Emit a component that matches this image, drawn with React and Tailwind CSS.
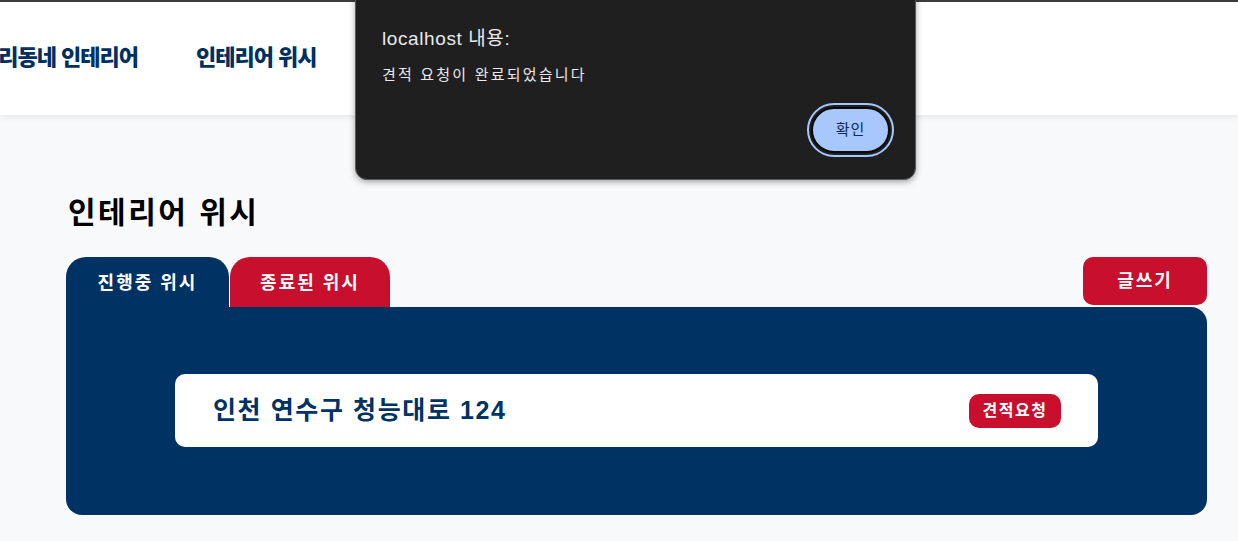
import React from "react";

const KR = { fontFamily: '"Liberation Sans", "Noto Sans CJK KR", "Noto Sans", sans-serif' };

function AlertBox() {
  return (
    <div
      className="absolute left-[355px] top-[-12px] w-[561px] h-[192px] rounded-[12px] bg-[#1f1f1f] border border-[#5a5a5a] shadow-[0_2px_6px_rgba(0,0,0,0.35)]"
      style={KR}
    >
      <div className="pl-[26px] pt-[37px]">
        <p className="text-[19px] leading-[26px] tracking-[0.6px] text-[#e8eaed]">localhost 내용:</p>
        <p className="mt-[13px] text-[15px] leading-[20px] tracking-[2.2px] text-[#e8eaed]">견적 요청이 완료되었습니다</p>
      </div>
      <div className="absolute right-[21px] bottom-[22px] rounded-full border-2 border-[#a8c7fa] p-[2px]">
        <button className="h-[46px] w-[79px] rounded-full bg-[#a8c7fa] border-2 border-[#0b0b0b] text-[15px] tracking-[1px] text-[#0a2a5c]">
          확인
        </button>
      </div>
    </div>
  );
}

export default function App() {
  return (
    <div className="relative min-h-[541px] w-[1238px] overflow-hidden bg-[#f8f9fb]" style={KR}>
      <div className="h-[2px] bg-[#3c3c3c]" />
      <header className="h-[113px] bg-white shadow-[0_2px_6px_rgba(0,0,0,0.08)] flex items-center">
        <nav className="ml-[-21px] flex items-center gap-[58px] pb-[2px] text-[22px] font-black tracking-[-1px] text-[#00305f]">
          <span>우리동네 인테리어</span>
          <span>인테리어 위시</span>
        </nav>
      </header>

      <main className="pl-[66px] pr-[31px] pt-[78px]">
        <h1 className="pl-[2px] text-[30px] leading-[40px] font-bold tracking-[2.5px] text-black">인테리어 위시</h1>

        <div className="mt-[24px] flex items-end justify-between">
          <div className="flex gap-[1px]">
            <button className="h-[50px] w-[163px] rounded-t-[20px] bg-[#003263] pt-[2px] text-[18px] font-bold tracking-[2px] text-white">
              진행중 위시
            </button>
            <button className="h-[50px] w-[160px] rounded-t-[20px] bg-[#c8102e] pt-[2px] text-[18px] font-bold tracking-[2px] text-white">
              종료된 위시
            </button>
          </div>
          <button className="mb-[2px] h-[48px] w-[124px] rounded-[10px] bg-[#c8102e] text-[18px] font-bold tracking-[2px] text-white">
            글쓰기
          </button>
        </div>

        <section className="h-[208px] rounded-b-[16px] rounded-tr-[16px] bg-[#003263] px-[109px] pt-[67px]">
          <div className="flex h-[73px] items-center justify-between rounded-[10px] bg-white pl-[38px] pr-[37px]">
            <span className="text-[25px] font-bold tracking-[1.6px] text-[#003263]">인천 연수구 청능대로 124</span>
            <button className="h-[34px] w-[92px] rounded-[10px] bg-[#c8102e] text-[16px] font-bold tracking-[1.5px] text-white">
              견적요청
            </button>
          </div>
        </section>
      </main>

      <AlertBox />
    </div>
  );
}
